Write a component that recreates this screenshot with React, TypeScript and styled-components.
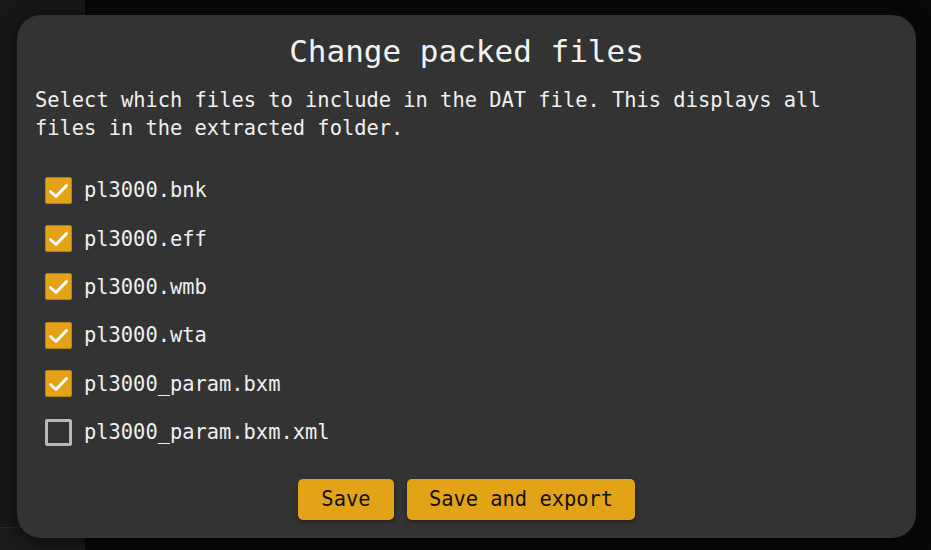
import * as React from 'react';
import styled, { createGlobalStyle } from 'styled-components';

const GlobalStyle = createGlobalStyle`
  html, body {
    margin: 0;
    padding: 0;
    background: #0a0a0a;
  }
  body {
    font-family: 'DejaVu Sans Mono', 'Liberation Mono', monospace;
  }
`;

const Page = styled.div`
  position: relative;
  width: 931px;
  height: 550px;
  display: flex;
  overflow: hidden;
`;

const Sidebar = styled.div`
  width: 85px;
  display: flex;
  flex-direction: column;
  justify-content: flex-end;
  background: #171717;
`;

const SidebarFoot = styled.div`
  height: 22px;
  border-top: 1px solid #262626;
  background: #1a1a1a;
`;

const Main = styled.div`
  flex: 1;
  background: #080808;
`;

const Modal = styled.div`
  position: absolute;
  left: 17px;
  top: 15px;
  width: 899px;
  box-sizing: border-box;
  padding: 18px;
  background: #333333;
  border-radius: 24px;
  box-shadow: 0 4px 16px rgba(0, 0, 0, 0.5);
  color: #efefef;
`;

const Title = styled.h2`
  margin: 0;
  text-align: center;
  font-size: 31px;
  font-weight: 400;
  line-height: 37px;
  color: #f2f2f2;
`;

const Description = styled.p`
  margin: 16px 0 24px;
  width: 800px;
  font-size: 20.4px;
  line-height: 28px;
`;

const FileList = styled.div`
  display: flex;
  flex-direction: column;
  padding-left: 10px;
`;

const Row = styled.label`
  height: 48.4px;
  display: flex;
  align-items: center;
  gap: 12px;
  font-size: 20.4px;
  cursor: pointer;
`;

const Box = styled.span<{ $checked: boolean }>`
  width: 27px;
  height: 27px;
  box-sizing: border-box;
  border-radius: 2px;
  display: flex;
  align-items: center;
  justify-content: center;
  background: ${(p) => (p.$checked ? '#e3a316' : 'transparent')};
  border: ${(p) => (p.$checked ? '1px solid #b8841a' : '3px solid #b9b9b9')};
`;

const Actions = styled.div`
  margin-top: 22.6px;
  display: flex;
  justify-content: center;
  gap: 13px;
`;

const Button = styled.button`
  height: 41px;
  min-width: 96px;
  padding: 0 22px;
  border: none;
  border-radius: 5px;
  background: #e3a316;
  color: #111;
  font-family: inherit;
  font-size: 20.4px;
  box-shadow: 0 2px 4px rgba(0, 0, 0, 0.35);
  cursor: pointer;
`;

const files = [
  { name: 'pl3000.bnk', checked: true },
  { name: 'pl3000.eff', checked: true },
  { name: 'pl3000.wmb', checked: true },
  { name: 'pl3000.wta', checked: true },
  { name: 'pl3000_param.bxm', checked: true },
  { name: 'pl3000_param.bxm.xml', checked: false },
];

const Check = () => (
  <svg width='25' height='25' viewBox='0 0 25 25'>
    <path d='M4.5 13.5 L10 18.5 L20.5 7.5' fill='none' stroke='#fff' strokeWidth='3' strokeLinecap='round' strokeLinejoin='round' />
  </svg>
);

export default function App() {
  const [state, setState] = React.useState(files);

  const toggle = (i: number) =>
    setState((s) => s.map((f, j) => (j === i ? { ...f, checked: !f.checked } : f)));

  return (
    <>
      <GlobalStyle />
      <Page>
        <Sidebar>
          <SidebarFoot />
        </Sidebar>
        <Main />
        <Modal>
          <Title>Change packed files</Title>
          <Description>
            Select which files to include in the DAT file. This displays all files in the extracted folder.
          </Description>
          <FileList>
            {state.map((f, i) => (
              <Row key={f.name} onClick={() => toggle(i)}>
                <Box $checked={f.checked}>{f.checked && <Check />}</Box>
                {f.name}
              </Row>
            ))}
          </FileList>
          <Actions>
            <Button>Save</Button>
            <Button>Save and export</Button>
          </Actions>
        </Modal>
      </Page>
    </>
  );
}
